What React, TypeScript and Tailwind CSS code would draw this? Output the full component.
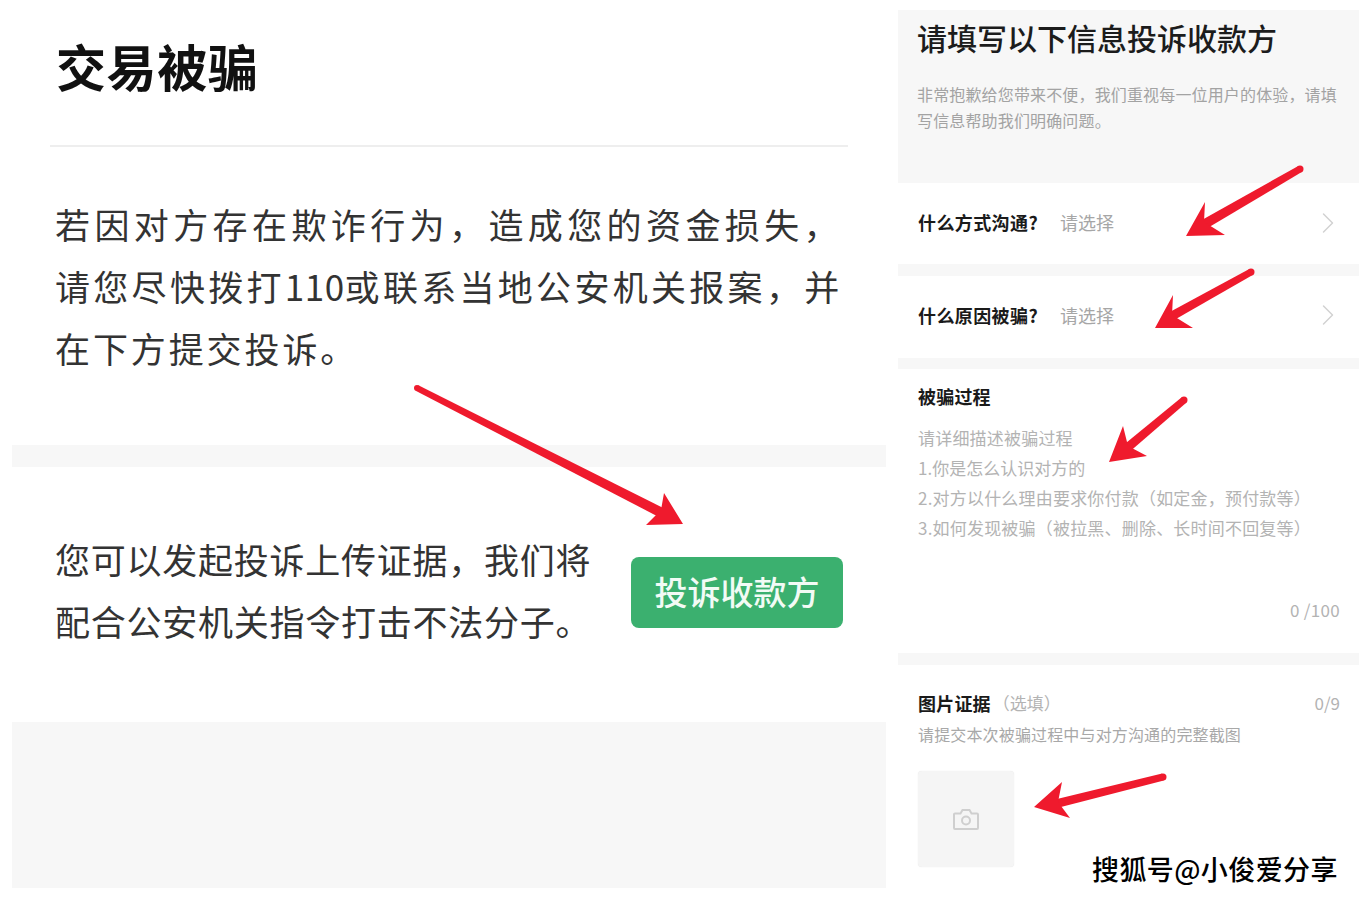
import { ChevronRight } from "lucide-react";

// tail x,y -> neck x,y, plus the head polygon
const arrows = [
  { line: [417, 388, 662, 513], tailW: 6, neckW: 10, head: "683,524 664,493 661,510 646,525" },
  { line: [1300, 169, 1203, 225], tailW: 7, neckW: 10, head: "1186,236 1205,202 1204,222 1225,235" },
  { line: [1251, 272, 1172, 316], tailW: 7, neckW: 9, head: "1155,328 1173,295 1172,315 1193,328" },
  { line: [1184, 400, 1127, 448], tailW: 7, neckW: 9, head: "1109,462 1123,426 1128,446 1147,456" },
  { line: [1163, 777, 1055, 804], tailW: 7, neckW: 9, head: "1034,807 1062,782 1058,802 1070,818" },
];

function taper([x1, y1, x2, y2]: number[], tailW: number, neckW: number) {
  const len = Math.hypot(x2 - x1, y2 - y1);
  const nx = -(y2 - y1) / len;
  const ny = (x2 - x1) / len;
  return [
    [x1 + (nx * tailW) / 2, y1 + (ny * tailW) / 2],
    [x2 + (nx * neckW) / 2, y2 + (ny * neckW) / 2],
    [x2 - (nx * neckW) / 2, y2 - (ny * neckW) / 2],
    [x1 - (nx * tailW) / 2, y1 - (ny * tailW) / 2],
  ]
    .map((p) => p.join(","))
    .join(" ");
}

function Arrows() {
  return (
    <svg className="pointer-events-none absolute left-0 top-0" width="1370" height="898" viewBox="0 0 1370 898">
      {arrows.map((a) => (
        <g key={a.head} fill="#ef1a2d">
          <circle cx={a.line[0]} cy={a.line[1]} r={a.tailW / 2} />
          <polygon points={taper(a.line, a.tailW, a.neckW)} />
          <polygon points={a.head} />
        </g>
      ))}
    </svg>
  );
}

function SelectRow({ label, height }: { label: string; height: string }) {
  return (
    <div className={`flex items-center pl-5 pr-[13px] ${height}`}>
      <span className="w-[142px] text-[18px] font-bold tracking-[0.4px] text-[#1a1a1a]">{label}</span>
      <span className="text-[18px] text-[#a6a6a6]">请选择</span>
      <ChevronRight className="ml-auto text-[#d2d2d2]" size={36} strokeWidth={1} />
    </div>
  );
}

function CameraGlyph() {
  return (
    <svg width="26" height="22" viewBox="0 0 26 22" fill="none" stroke="#cfcfcf" strokeWidth="2">
      <path d="M2 5.5h5.5L9.5 2h7l2 3.5H24a1 1 0 0 1 1 1V20a1 1 0 0 1-1 1H2a1 1 0 0 1-1-1V6.5a1 1 0 0 1 1-1z" />
      <circle cx="13" cy="12.5" r="4" />
    </svg>
  );
}

export default function App() {
  return (
    <div className="relative flex h-[898px] w-[1370px] overflow-hidden bg-white font-['Noto_Sans_CJK_SC','Noto_Sans',sans-serif]">
      {/* left screenshot */}
      <div className="ml-3 flex h-[888px] w-[874px] flex-col">
        <section className="h-[445px]">
          <div className="ml-[38px] mr-[38px] h-[147px] border-b-2 border-[#eeeeee] pl-[6px] pt-[30px]">
            <h1 className="text-[50px] font-bold leading-[70px] tracking-[0.6px] text-[#111111]">交易被骗</h1>
          </div>
          <div className="pl-[43px] pt-[46px] text-[35px] leading-[62px] whitespace-nowrap text-[#333333]">
            <p className="tracking-[4.4px]">若因对方存在欺诈行为，造成您的资金损失，</p>
            <p className="tracking-[3.3px]">
              请您尽快拨打<span className="tracking-[0.5px]">110</span>或联系当地公安机关报案，并
            </p>
            <p className="tracking-[2.9px]">在下方提交投诉。</p>
          </div>
        </section>
        <div className="h-[22px] bg-[#f7f7f7]" />
        <section className="flex h-[255px] items-start pl-[43px]">
          <div className="w-[535px] pt-[61px] text-[35px] leading-[62px] tracking-[0.75px] whitespace-nowrap text-[#333333]">
            <p>您可以发起投诉上传证据，我们将</p>
            <p>配合公安机关指令打击不法分子。</p>
          </div>
          <button
            type="button"
            className="ml-[41px] mt-[90px] h-[71px] w-[212px] rounded-lg bg-[#3bb06f] pb-[2px] text-[33px] font-medium text-[#f2fbf5]"
          >
            投诉收款方
          </button>
        </section>
        <div className="flex-1 bg-[#f7f7f7]" />
      </div>

      {/* right screenshot */}
      <div className="ml-3 mt-[10px] flex h-[878px] w-[461px] flex-col">
        <section className="h-[173px] bg-[#f7f7f7] pl-[19px] pr-[19px]">
          <h2 className="pt-[5px] text-[30px] font-medium leading-[44px] text-[#1c1c1c]">请填写以下信息投诉收款方</h2>
          <p className="mt-[22px] text-[16px] leading-[26px] tracking-[0.15px] text-[#a3a3a3]">
            非常抱歉给您带来不便，我们重视每一位用户的体验，请填写信息帮助我们明确问题。
          </p>
        </section>
        <SelectRow label="什么方式沟通?" height="h-[81px] pb-[2px]" />
        <div className="h-3 bg-[#f7f7f7]" />
        <SelectRow label="什么原因被骗?" height="h-[82px] pb-[4px]" />
        <div className="h-[11px] bg-[#f7f7f7]" />
        <section className="flex h-[284px] flex-col pl-5 pr-[19px]">
          <h3 className="pt-[15px] text-[18px] font-bold leading-6 tracking-[0.2px] text-[#1a1a1a]">被骗过程</h3>
          <div className="mt-[15px] text-[17px] leading-[30px] tracking-[0.2px] text-[#b3b3b3]">
            <p>请详细描述被骗过程</p>
            <p className="tracking-normal">1.你是怎么认识对方的</p>
            <p>2.对方以什么理由要求你付款（如定金，预付款等）</p>
            <p>3.如何发现被骗（被拉黑、删除、长时间不回复等）</p>
          </div>
          <p className="mt-auto pb-[31px] text-right text-[17px] leading-6 tracking-[0.3px] text-[#b3b3b3]">0 /100</p>
        </section>
        <div className="h-3 bg-[#f7f7f7]" />
        <section className="flex-1 pl-5 pr-[19px]">
          <div className="flex items-center pt-[26px]">
            <h3 className="text-[18px] font-bold leading-6 tracking-[0.2px] text-[#1a1a1a]">图片证据</h3>
            <span className="ml-[2px] text-[17px] leading-6 text-[#b3b3b3]">（选填）</span>
            <span className="ml-auto text-[17px] leading-6 text-[#b3b3b3]">0/9</span>
          </div>
          <p className="mt-[7px] text-[16px] leading-6 tracking-[0.15px] text-[#a8a8a8]">
            请提交本次被骗过程中与对方沟通的完整截图
          </p>
          <div className="mt-[25px] flex h-[96px] w-[96px] items-center justify-center rounded bg-[#f5f5f5] shadow-[0_0_1px_#dcdcdc]">
            <CameraGlyph />
          </div>
        </section>
      </div>

      <Arrows />

      <span className="absolute left-[1092px] top-[850px] text-[27px] font-medium leading-[38px] tracking-[0.4px] text-black [text-shadow:1px_1px_0_#fff,-1px_-1px_0_#fff,1px_-1px_0_#fff,-1px_1px_0_#fff]">
        搜狐号@小俊爱分享
      </span>
    </div>
  );
}
